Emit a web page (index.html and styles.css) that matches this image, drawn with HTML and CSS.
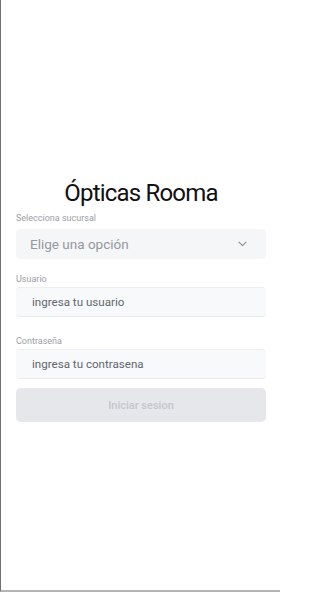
FILE: index.html
```html
<!DOCTYPE html>
<html lang="es">
<head>
<meta charset="utf-8">
<title>Ópticas Rooma</title>
<link rel="stylesheet" href="styles.css">
</head>
<body>
<div class="screen">
  <main class="login">
    <h1 class="title">Ópticas Rooma</h1>
    <form class="form">
      <div class="field field-branch">
        <label class="label">Selecciona sucursal</label>
        <div class="select">
          <span class="select-text">Elige una opción</span>
          <svg class="chevron" width="9" height="6" viewBox="0 0 9 6"><path d="M1 1.2l3.5 3.5 3.5-3.5" fill="none" stroke="#8a8f98" stroke-width="1.2" stroke-linecap="round" stroke-linejoin="round"/></svg>
        </div>
      </div>
      <div class="field field-user">
        <label class="label">Usuario</label>
        <div class="input"><span class="placeholder">ingresa tu usuario</span></div>
      </div>
      <div class="field field-pass">
        <label class="label">Contraseña</label>
        <div class="input"><span class="placeholder">ingresa tu contrasena</span></div>
      </div>
      <button type="button" class="button">Iniciar sesion</button>
    </form>
  </main>
</div>
</body>
</html>
```

FILE: styles.css
```css
* { box-sizing: border-box; }
html, body { margin: 0; padding: 0; background: #fff; }
body { font-family: Roboto, "Liberation Sans", sans-serif; }
.screen {
  width: 280px;
  height: 592px;
  border-left: 1px solid #707070;
  border-bottom: 2px solid #b5b5b5;
  padding-top: 178px;
}
.login {
  padding: 0 14px 0 15px;
}
.title {
  margin: 0 0 4px;
  text-align: center;
  font-weight: 400;
  font-size: 24px;
  letter-spacing: -0.8px;
  line-height: 30px;
  color: #111;
}
.form { display: flex; flex-direction: column; }
.field { display: flex; flex-direction: column; }
.label {
  font-size: 9px;
  line-height: 12px;
  color: #9a9ea5;
  margin-bottom: 2px;
}
.field-branch { margin-bottom: 14px; }
.field-branch .label { margin-bottom: 5px; }
.field-user { margin-bottom: 18px; }
.select, .input {
  height: 30px;
  border-radius: 4px;
  display: flex;
  align-items: center;
  padding: 0 16px;
}
.select {
  background: #f5f6f8;
  justify-content: space-between;
  padding-left: 14px;
  padding-right: 19px;
}
.input {
  background: #f8f9fb;
  border-top: 1px solid #eceef2;
  border-bottom: 1px solid #e8eaee;
}
.select-text { font-size: 13.5px; color: #94989f; }
.placeholder { font-size: 11.6px; color: #62666d; }
.chevron { display: block; }
.button {
  margin-top: 9px;
  height: 34px;
  border: 0;
  border-radius: 5px;
  background: #e6e7eb;
  color: #c3c6cc;
  font-family: inherit;
  font-size: 11px;
  font-weight: 500;
  padding: 0;
}
```
